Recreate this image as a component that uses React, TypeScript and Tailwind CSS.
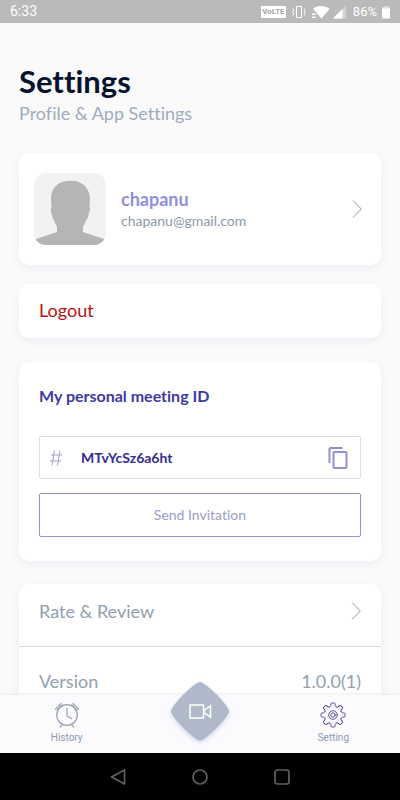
import { useState, type ReactNode } from 'react';

const TOOTH_ANGLES = [0, 45, 90, 135, 180, 225, 270, 315];

const Card = ({
	children,
	className,
}: {
	readonly children: ReactNode;
	readonly className: string;
}) => (
	<section
		className={`rounded-[10px] bg-white shadow-[0_3px_8px_rgba(90,90,200,0.08)] ${className}`}
	>
		{children}
	</section>
);

const Chevron = () => (
	<svg
		className="h-5 w-[10px] shrink-0"
		viewBox="0 0 10 20"
		fill="none"
		stroke="#92979f"
		aria-hidden="true"
	>
		<path d="M1 1.5 9.3 10 1 18.5" />
	</svg>
);

const Avatar = () => (
	<svg
		className="size-[72px] shrink-0 rounded-xl bg-[#f2f2f2]"
		viewBox="0 0 72 72"
		fill="#b5b5b5"
		aria-hidden="true"
	>
		<path d="M30 8.5 35 7.8 42 8C51 10.5 56 17.5 56 26L55.5 34C57 36 55 39 54.5 42 54 45 53 46.5 52 47 51.5 50 50 52 49 53.5V59L70 66 72 67V72H0V67L2 66 23 59V53.5C22 52 20.5 50 20 47 19 46.5 18.5 45 18 42 17 39 16 36 17.5 34L17 26C17 17.5 21 11 30 8.5Z" />
	</svg>
);

const ClockIcon = () => (
	<svg
		className="size-[26px]"
		viewBox="0 0 26 26"
		fill="none"
		stroke="#98a0b0"
		strokeWidth="1.2"
		strokeLinecap="round"
		strokeLinejoin="round"
		aria-hidden="true"
	>
		<circle cx="13" cy="13" r="10.3" />
		<path d="M13 6.3V14L17.8 16.7" />
		<path d="M1.3 7.3 7 1.5M3.2 8 8.3 2.9M24.7 7.3 19 1.5M22.8 8 17.7 2.9M8.5 22.3 6.3 25M17.5 22.3 19.7 25" />
	</svg>
);

const GearIcon = () => (
	<svg
		className="size-[26px]"
		viewBox="-13 -13 26 26"
		fill="none"
		stroke="#5550a8"
		strokeLinecap="round"
		aria-hidden="true"
	>
		{TOOTH_ANGLES.map((angle) => (
			<path
				key={angle}
				transform={`rotate(${angle})`}
				d="M-3.37-8.13C-2.6-8.5-2.3-8.9-2.2-9.5L-2-11.2Q-1.9-12-1.2-12H1.2Q1.9-12 2-11.2L2.2-9.5C2.3-8.9 2.6-8.5 3.37-8.13"
			/>
		))}
		<circle r="4.3" />
		<circle r="2.2" />
	</svg>
);

const StatusBar = () => (
	<header className="flex h-[23px] shrink-0 items-center justify-between bg-[#bababa] pr-[9px] pl-[10px] font-[Roboto,sans-serif] text-[14px] text-white">
		<time>6:33</time>
		<div className="flex items-center">
			<span className="flex h-3 w-[25px] items-center justify-center bg-white text-[8px] font-bold text-[#a5a5a5]">
				VoLTE
			</span>
			<svg
				className="ml-[6px] size-[14px]"
				viewBox="0 0 14 14"
				fill="none"
				stroke="white"
				aria-hidden="true"
			>
				<path d="M4.5 1.5H9.5V12.5H4.5ZM.7 3.5 2 5.2.7 7 2 8.8.7 10.5M13.3 3.5 12 5.2 13.3 7 12 8.8 13.3 10.5" />
			</svg>
			<svg
				className="ml-[6px] h-[14px] w-[18px]"
				viewBox="0 0 18 14"
				fill="white"
				aria-hidden="true"
			>
				<path d="M1 3.8C5.5.2 12.5.2 17.7 3.8L9.5 13.5Z" />
				<path d="M0 8.5H3.5V10H0ZM0 11.5H3.5V13H0Z" />
			</svg>
			<svg
				className="ml-[3px] h-[14px] w-[13px]"
				viewBox="0 0 13 14"
				fill="white"
				aria-hidden="true"
			>
				<path d="M13 .5V13.5H0Z" opacity=".35" />
				<path d="M9.5 4V13.5H0Z" />
			</svg>
			<span className="ml-[7px] text-[13px]">86%</span>
			<svg
				className="ml-1 h-[14px] w-[10px]"
				viewBox="0 0 10 14"
				fill="white"
				aria-hidden="true"
			>
				<path d="M3 1H7V2H9V4H1V2H3Z" opacity=".5" />
				<path d="M1 3.5H9V13.5H1Z" />
			</svg>
		</div>
	</header>
);

const TabBar = ({
	tab,
	setTab,
}: {
	readonly tab: string;
	readonly setTab: (tab: string) => void;
}) => (
	<nav className="relative z-10 grid h-[58px] shrink-0 grid-cols-3 bg-[#fbfbfe] font-[Roboto,sans-serif] text-[10px] leading-3 text-[#8e9aac] shadow-[0_-1px_3px_rgba(90,90,160,0.12)]">
		<button
			className="flex flex-col items-center gap-1 pt-[7px]"
			aria-pressed={tab === 'history'}
			onClick={() => setTab('history')}
		>
			<ClockIcon />
			History
		</button>
		<button
			className="-mt-[14px] flex h-[60px] justify-center"
			aria-label="Start meeting"
		>
			<svg
				className="size-[60px] drop-shadow-[0_2px_2px_rgba(110,130,220,0.3)]"
				viewBox="0 0 60 60"
				aria-hidden="true"
			>
				<path
					d="M30 1C35.5 1 59 24.5 59 30.3S35.5 59.5 30 59.5 1 36 1 30.3 24.5 1 30 1Z"
					fill="#b0b9c9"
				/>
				<path
					d="M20 24H33.5V37H20ZM34.5 29 40.5 25V36L34.5 32Z"
					fill="none"
					stroke="white"
					strokeWidth="1.5"
				/>
			</svg>
		</button>
		<button
			className="flex flex-col items-center gap-1 pt-[7px]"
			aria-pressed={tab === 'setting'}
			onClick={() => setTab('setting')}
		>
			<GearIcon />
			Setting
		</button>
	</nav>
);

const SystemBar = () => (
	<footer className="flex h-[47px] shrink-0 items-center justify-center gap-[66px] bg-black text-[#606060]">
		<button aria-label="Back">
			<svg
				className="size-4"
				viewBox="0 0 16 16"
				fill="none"
				stroke="currentColor"
				strokeWidth="1.7"
				strokeLinejoin="round"
			>
				<path d="M14.5 1V15L1.5 8Z" />
			</svg>
		</button>
		<button aria-label="Home">
			<svg
				className="size-4"
				viewBox="0 0 16 16"
				fill="none"
				stroke="currentColor"
				strokeWidth="1.7"
			>
				<circle cx="8" cy="8" r="7" />
			</svg>
		</button>
		<button aria-label="Recent apps">
			<svg
				className="size-4"
				viewBox="0 0 16 16"
				fill="none"
				stroke="currentColor"
				strokeWidth="1.7"
			>
				<rect x="1" y="1" width="14" height="14" rx="2.5" />
			</svg>
		</button>
	</footer>
);

export default function App() {
	const [tab, setTab] = useState('setting');
	const meetingId = 'MTvYcSz6a6ht';

	return (
		<div className="flex h-screen flex-col overflow-hidden bg-[#fafafa] font-[Lato,sans-serif] [font-variant-ligatures:none]">
			<StatusBar />
			<main className="min-h-0 flex-1 overflow-hidden px-[19px] pt-10">
				<h1 className="text-[31px] leading-9 font-bold text-[#07122d]">
					Settings
				</h1>
				<p className="text-[18px] leading-7 text-[#9eacbd]">
					Profile &amp; App Settings
				</p>

				<Card className="mt-[26px]">
					<button className="flex w-full items-center py-5 pr-[19px] pl-[15px] text-left">
						<Avatar />
						<span className="ml-[15px] min-w-0 flex-1">
							<span className="block text-[18px] leading-6 font-bold text-[#8f8fde]">
								chapanu
							</span>
							<span className="block text-[14px] leading-5 text-[#8d98a8]">
								chapanu@gmail.com
							</span>
						</span>
						<Chevron />
					</button>
				</Card>

				<Card className="mt-[19px]">
					<button className="block w-full px-5 pt-[14px] pb-4 text-left text-[18px] leading-6 text-[#bd1212]">
						Logout
					</button>
				</Card>

				<Card className="mt-6 px-5 pt-[22px] pb-6">
					<label
						htmlFor="meeting-id"
						className="block text-[16px] leading-6 font-bold text-[#3d3a9f]"
					>
						My personal meeting ID
					</label>
					<div className="mt-7 flex h-[43px] items-center rounded-xs border border-[#dedeea] px-[10px]">
						<svg
							className="h-4 w-3 shrink-0"
							viewBox="0 0 12 16"
							fill="none"
							stroke="#9fa0d5"
							aria-hidden="true"
						>
							<path d="M4.5 .5 2 15.5M10 .5 7.5 15.5M1 5H12M0 11H11" />
						</svg>
						<input
							id="meeting-id"
							className="ml-[19px] min-w-0 flex-1 text-[14px] font-bold text-[#302c91] outline-none"
							readOnly
							type="text"
							value={meetingId}
						/>
						<button
							aria-label="Copy meeting ID"
							onClick={() => navigator.clipboard?.writeText(meetingId)}
						>
							<svg
								className="size-6"
								viewBox="0 0 24 24"
								fill="#9190d3"
								aria-hidden="true"
							>
								<path d="M16.5 1H4.5C3.4 1 2.5 1.9 2.5 3V17H4.5V3H16.500V1ZM19.500 5H8.500C7.400 5 6.500 5.900 6.500 7V21C6.500 22.100 7.400 23 8.500 23H19.500C20.600 23 21.500 22.100 21.500 21V7C21.500 5.900 20.600 5 19.500 5ZM19.500 21H8.500V7H19.500V21Z" />
							</svg>
						</button>
					</div>
					<button className="mt-[14px] h-11 w-full rounded-xs border border-[#9695cb] pb-[2px] text-[14px] text-[#9c9bcd]">
						Send Invitation
					</button>
				</Card>

				<Card className="mt-[23px] text-[18px] leading-6 text-[#929fb1]">
					<button className="flex h-[62px] w-full items-center justify-between px-5 pb-2 text-left">
						Rate &amp; Review
						<Chevron />
					</button>
					<div className="flex h-[70px] items-center justify-between border-t border-[#d6dade] px-5 pb-[2px]">
						<span>Version</span>
						<span>1.0.0(1)</span>
					</div>
				</Card>
			</main>
			<TabBar tab={tab} setTab={setTab} />
			<SystemBar />
		</div>
	);
}
